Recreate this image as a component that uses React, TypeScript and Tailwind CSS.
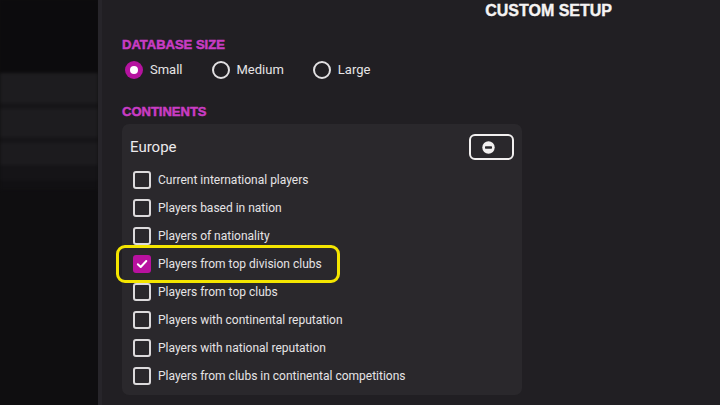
import React from 'react';

const options = [
  { label: 'Current international players', checked: false },
  { label: 'Players based in nation', checked: false },
  { label: 'Players of nationality', checked: false },
  { label: 'Players from top division clubs', checked: true, highlight: true },
  { label: 'Players from top clubs', checked: false },
  { label: 'Players with continental reputation', checked: false },
  { label: 'Players with national reputation', checked: false },
  { label: 'Players from clubs in continental competitions', checked: false },
];

const sizes = [
  { label: 'Small', selected: true },
  { label: 'Medium', selected: false },
  { label: 'Large', selected: false },
];

function Radio({ label, selected }: { label: string; selected: boolean }) {
  return (
    <div className="flex h-5 items-center gap-[7px]">
      {selected ? (
        <span className="flex h-[18px] w-[18px] items-center justify-center rounded-full bg-[#b5139f]">
          <span className="h-[8px] w-[8px] rounded-full bg-white" />
        </span>
      ) : (
        <span className="h-[18px] w-[18px] rounded-full border-2 border-[#e2e0e2]" />
      )}
      <span className="text-[13px] text-[#e6e4e6]">{label}</span>
    </div>
  );
}

function Checkbox({ checked }: { checked: boolean }) {
  if (checked) {
    return (
      <span className="flex h-[18px] w-[18px] items-center justify-center rounded-[3px] bg-[#b8119f]">
        <svg width="12" height="12" viewBox="0 0 12 12" fill="none">
          <path d="M1.8 6.2 L4.7 9 L10.3 3" stroke="white" strokeWidth="2" strokeLinecap="round" strokeLinejoin="round" />
        </svg>
      </span>
    );
  }
  return <span className="h-[18px] w-[18px] rounded-[3px] border-2 border-[#dcdadc]" />;
}

function SideStripes() {
  return (
    <div className="flex w-[102px] shrink-0 flex-col overflow-hidden border-r-4 border-[#27252a] bg-[#0f0e10]">
      <div className="flex flex-col blur-[1.5px]">
        <div className="h-[73px] bg-[#0c0b0d]" />
        <div className="h-[30px] bg-[#1d1c1f]" />
        <div className="h-[6px] bg-[#161518]" />
        <div className="h-[28px] bg-[#1d1c1f]" />
        <div className="h-[6px] bg-[#161518]" />
        <div className="h-[22px] bg-[#1c1b1e]" />
        <div className="h-[15px] bg-[#151417]" />
        <div className="h-[10px] bg-[#111013]" />
      </div>
    </div>
  );
}

export default function App() {
  return (
    <div className="flex h-[405px] w-[720px] overflow-hidden bg-[#211f23] font-['Roboto',sans-serif]">
      <SideStripes />

      <div className="flex flex-1 flex-col pl-5">
        <div className="flex justify-end pr-[108px]">
          <h1 className="font-['Liberation_Sans',Arial,sans-serif] text-[16px] font-bold leading-[22px] text-[#f5f3f3] [-webkit-text-stroke:0.4px_#f5f3f3]">
            CUSTOM SETUP
          </h1>
        </div>

        <h2 className="mt-[15px] font-['Liberation_Sans',Arial,sans-serif] text-[13px] font-bold leading-4 text-[#c93cc4] [-webkit-text-stroke:0.5px_#c93cc4]">
          DATABASE SIZE
        </h2>
        <div className="mt-[7px] flex gap-[29px] pl-[3px]">
          {sizes.map((s) => (
            <Radio key={s.label} label={s.label} selected={s.selected} />
          ))}
        </div>

        <h2 className="mt-6 font-['Liberation_Sans',Arial,sans-serif] text-[13px] font-bold leading-4 text-[#c93cc4] [-webkit-text-stroke:0.5px_#c93cc4]">
          CONTINENTS
        </h2>

        <div className="mt-[4px] w-[400px] rounded-[7px] bg-[#2a282c] pb-[5px] pt-[10px]">
          <div className="flex h-[26px] items-center justify-between pl-2 pr-2">
            <span className="text-[15px] text-[#eceaec]">Europe</span>
            <button className="flex h-[26px] w-[45px] items-center rounded-[6px] border-2 border-[#f2f0f0] pl-[11px]">
              <svg width="13" height="13" viewBox="0 0 13 13">
                <circle cx="6.5" cy="6.5" r="6.2" fill="#f2f0f0" />
                <rect x="3" y="5.3" width="7" height="2.4" rx="0.6" fill="#2a282c" />
              </svg>
            </button>
          </div>

          <div className="mt-[6px] flex flex-col">
            {options.map((o) => (
              <div key={o.label} className="relative flex h-7 items-center gap-[7px] pl-[11px]">
                {o.highlight && (
                  <span className="pointer-events-none absolute left-[-6px] top-[-5px] h-[38px] w-[224px] rounded-[9px] border-[3px] border-[#f4e500]" />
                )}
                <Checkbox checked={o.checked} />
                <span className="text-[12px] text-[#e6e4e6]">{o.label}</span>
              </div>
            ))}
          </div>
        </div>
      </div>
    </div>
  );
}
